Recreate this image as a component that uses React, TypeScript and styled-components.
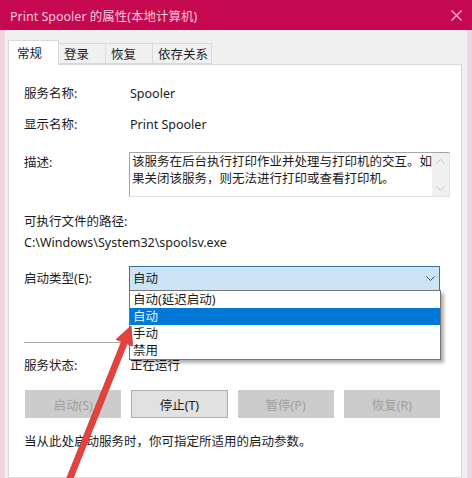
import React from 'react';
import styled, { createGlobalStyle } from 'styled-components';

const Global = createGlobalStyle`
  html, body { margin: 0; padding: 0; background: #f0f0f0; }
  body { font-family: "Noto Sans", "Noto Sans CJK SC", sans-serif; }
`;

const Window = styled.div`
  position: relative;
  width: 472px;
  height: 478px;
  overflow: hidden;
  display: flex;
  flex-direction: column;
  background: #f0f0f0;
  font-family: "Noto Sans", "Noto Sans CJK SC", sans-serif;
  font-size: 12.5px;
  color: #1b1b1b;
`;

const TitleBar = styled.div`
  flex: none;
  height: 30px;
  background: #c5084f;
  display: flex;
  align-items: center;
  justify-content: space-between;
  padding: 0 10px;
  color: #f6c8da;
  font-size: 12.5px;
`;

const Body = styled.div`
  flex: 1;
  display: flex;
  flex-direction: column;
  border-left: 5px solid #f6d3e2;
  border-right: 5px solid #f6d3e2;
  padding: 10px 5px 0 3px;
`;

const TabRow = styled.div`
  display: flex;
  align-items: flex-end;
  height: 24px;
  position: relative;
  z-index: 1;
`;

const Tab = styled.div<{ $active?: boolean; $w: number }>`
  box-sizing: border-box;
  width: ${p => p.$w}px;
  height: ${p => (p.$active ? 25 : 21)}px;
  margin-bottom: ${p => (p.$active ? -1 : 0)}px;
  padding-left: ${p => (p.$active ? 8 : 5)}px;
  background: ${p => (p.$active ? '#ffffff' : '#f0f0f0')};
  border: 1px solid #d9d9d9;
  border-bottom: ${p => (p.$active ? 'none' : '1px solid #d9d9d9')};
  border-left: ${p => (p.$active ? '1px solid #d9d9d9' : 'none')};
  display: flex;
  align-items: center;
  padding-bottom: ${p => (p.$active ? 2 : 0)}px;
`;

const Panel = styled.div`
  flex: 1;
  position: relative;
  background: #ffffff;
  border: 1px solid #d9d9d9;
  padding: 0 21px 0 15px;
  display: flex;
  flex-direction: column;
`;

const Field = styled.div<{ $mt: number; $center?: boolean }>`
  margin-top: ${p => p.$mt}px;
  display: grid;
  grid-template-columns: 106px 1fr;
  align-items: ${p => (p.$center ? 'center' : 'start')};
  line-height: 18px;
`;

const Line = styled.div<{ $mt: number }>`
  margin-top: ${p => p.$mt}px;
  line-height: 18px;
  white-space: nowrap;
`;

const Label = styled.div<{ $pt?: number }>`
  padding-top: ${p => p.$pt ?? 0}px;
  white-space: nowrap;
`;

const TextBox = styled.div`
  margin-left: -1px;
  height: 45px;
  box-sizing: border-box;
  border: 1px solid #a6a6a6;
  border-right-color: #e3e3e3;
  border-bottom-color: #e3e3e3;
  display: flex;
`;

const TextArea = styled.div`
  flex: 1;
  min-width: 0;
  padding: 0 0 0 2px;
  line-height: 17px;
  overflow: hidden;
`;

const TextLine = styled.div`
  white-space: nowrap;
`;

const ScrollBar = styled.div`
  width: 17px;
  flex: none;
  background: #f0f0f0;
  display: flex;
  flex-direction: column;
  justify-content: space-between;
  align-items: center;
  padding: 6px 0 5px;
`;

const ComboWrap = styled.div`
  position: relative;
  margin-left: -1px;
`;

const Combo = styled.div`
  height: 25px;
  box-sizing: border-box;
  background: #cce4f7;
  border: 1px solid #3f6f9c;
  display: flex;
  align-items: center;
  justify-content: space-between;
  padding: 0 4px 0 3px;
`;

const DropList = styled.div`
  position: absolute;
  left: 0;
  top: calc(100% - 1px);
  width: 312px;
  box-sizing: border-box;
  background: #ffffff;
  border: 1px solid #767676;
  box-shadow: 3px 3px 3px rgba(0, 0, 0, 0.3);
  z-index: 5;
`;

const DropItem = styled.div<{ $selected?: boolean }>`
  height: 17px;
  line-height: 17px;
  padding-left: 3px;
  background: ${p => (p.$selected ? '#0078d7' : 'transparent')};
  color: ${p => (p.$selected ? '#e6f3ff' : '#1b1b1b')};
  white-space: nowrap;
`;

const Separator = styled.div<{ $mt: number }>`
  margin-top: ${p => p.$mt}px;
  height: 1px;
  background: #a9a9a9;
`;

const ButtonRow = styled.div<{ $mt: number }>`
  margin-top: ${p => p.$mt}px;
  margin-left: 1px;
  display: grid;
  grid-template-columns: repeat(4, 1fr);
  column-gap: 10px;
`;

const Button = styled.div<{ $disabled?: boolean }>`
  height: 28px;
  box-sizing: border-box;
  display: flex;
  align-items: center;
  justify-content: center;
  background: ${p => (p.$disabled ? '#cccccc' : '#e1e1e1')};
  border: 1px solid ${p => (p.$disabled ? '#cccccc' : '#adadad')};
  color: ${p => (p.$disabled ? '#a0a0a0' : '#1b1b1b')};
`;

const Overlay = styled.svg`
  position: absolute;
  left: 0;
  top: 0;
  pointer-events: none;
  z-index: 10;
`;

const Chevron = ({ up, color }: { up?: boolean; color: string }) => (
  <svg width="9" height="5" viewBox="0 0 9 5">
    <polyline
      points={up ? '0.5,4.5 4.5,0.5 8.5,4.5' : '0.5,0.5 4.5,4.5 8.5,0.5'}
      fill="none"
      stroke={color}
      strokeWidth="1"
    />
  </svg>
);

export default function App() {
  return (
    <Window>
      <Global />
      <TitleBar>
        <span>Print Spooler 的属性(本地计算机)</span>
        <svg width="11" height="11" viewBox="0 0 11 11">
          <path d="M0.5 0.5 L10.5 10.5 M10.5 0.5 L0.5 10.5" stroke="#f3c3d6" strokeWidth="1.2" />
        </svg>
      </TitleBar>
      <Body>
        <TabRow>
          <Tab $active $w={51}>常规</Tab>
          <Tab $w={47}>登录</Tab>
          <Tab $w={47}>恢复</Tab>
          <Tab $w={59}>依存关系</Tab>
        </TabRow>
        <Panel>
          <Field $mt={20}>
            <Label>服务名称:</Label>
            <div>Spooler</div>
          </Field>
          <Field $mt={13}>
            <Label>显示名称:</Label>
            <div>Print Spooler</div>
          </Field>
          <Field $mt={18}>
            <Label $pt={2}>描述:</Label>
            <TextBox>
              <TextArea>
                <TextLine>该服务在后台执行打印作业并处理与打印机的交互。如</TextLine>
                <TextLine>果关闭该服务，则无法进行打印或查看打印机。</TextLine>
              </TextArea>
              <ScrollBar>
                <Chevron up color="#c2c2c2" />
                <Chevron color="#c2c2c2" />
              </ScrollBar>
            </TextBox>
          </Field>
          <Line $mt={16}>可执行文件的路径:</Line>
          <Line $mt={3}>C:\Windows\System32\spoolsv.exe</Line>
          <Field $mt={14} $center>
            <Label>启动类型(E):</Label>
            <ComboWrap>
              <Combo>
                <span>自动</span>
                <Chevron color="#4a4a4a" />
              </Combo>
              <DropList>
                <DropItem>自动(延迟启动)</DropItem>
                <DropItem $selected>自动</DropItem>
                <DropItem>手动</DropItem>
                <DropItem>禁用</DropItem>
              </DropList>
            </ComboWrap>
          </Field>
          <Separator $mt={51} />
          <Field $mt={14}>
            <Label>服务状态:</Label>
            <div>正在运行</div>
          </Field>
          <ButtonRow $mt={15}>
            <Button $disabled>启动(S)</Button>
            <Button>停止(T)</Button>
            <Button $disabled>暂停(P)</Button>
            <Button $disabled>恢复(R)</Button>
          </ButtonRow>
          <Line $mt={15}>当从此处启动服务时，你可指定所适用的启动参数。</Line>
        </Panel>
      </Body>
      <Overlay width="472" height="478" viewBox="0 0 472 478">
        <polygon
          points="131,326 132.7,346 127.1,343.8 70.8,484.1 65.2,481.9 121.5,341.6 116,339.4"
          fill="#e2433f"
          stroke="#c93a36"
          strokeWidth="0.8"
          strokeLinejoin="round"
        />
      </Overlay>
    </Window>
  );
}
